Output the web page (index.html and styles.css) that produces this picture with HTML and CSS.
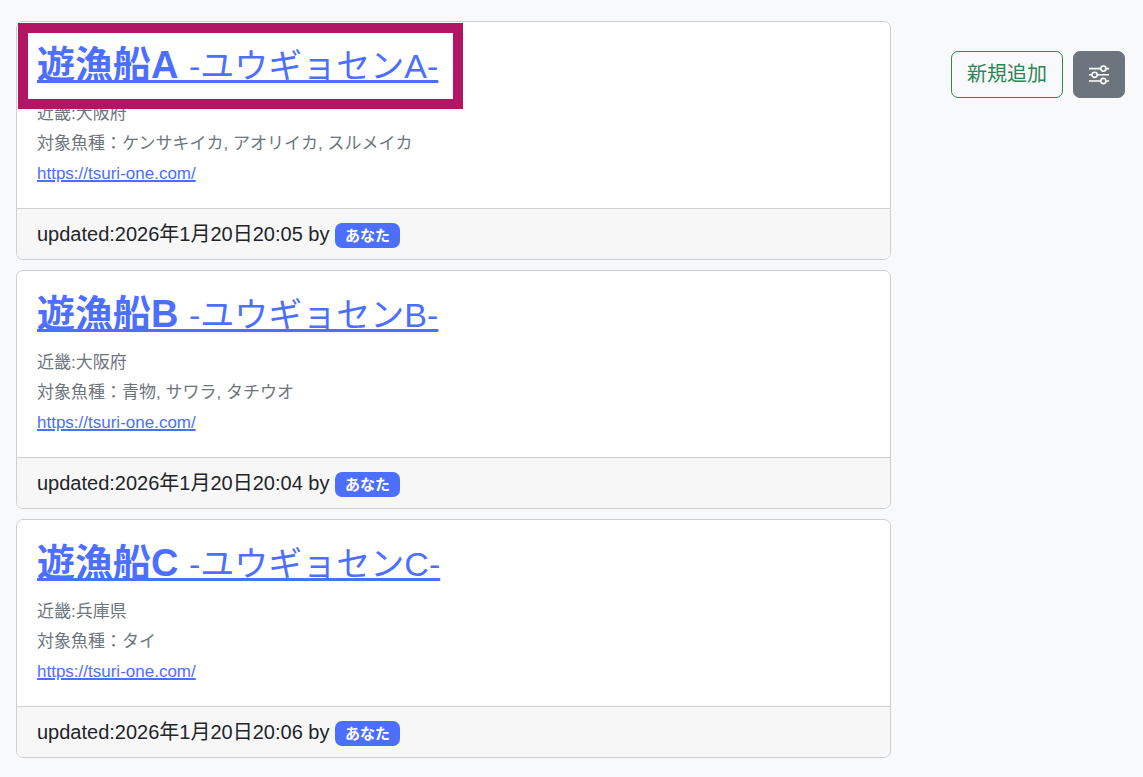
FILE: index.html
```
<!DOCTYPE html>
<html lang="ja">
<head>
<meta charset="utf-8">
<meta name="viewport" content="width=device-width, initial-scale=1">
<title>遊漁船一覧</title>
<link rel="stylesheet" href="styles.css">
</head>
<body>
<div class="page">
  <main class="list">
    <article class="card">
      <div class="card-body">
        <h2 class="title"><a class="highlighted" href="#a"><strong>遊漁船A </strong><span class="kana">-ユウギョセンA-</span></a></h2>
        <p class="meta">近畿:大阪府</p>
        <p class="meta">対象魚種：ケンサキイカ, アオリイカ, スルメイカ</p>
        <p class="site"><a href="https://tsuri-one.com/">https://tsuri-one.com/</a></p>
      </div>
      <footer class="card-footer">updated:2026年1月20日20:05 by <span class="badge">あなた</span></footer>
    </article>
    <article class="card">
      <div class="card-body">
        <h2 class="title"><a href="#b"><strong>遊漁船B </strong><span class="kana">-ユウギョセンB-</span></a></h2>
        <p class="meta">近畿:大阪府</p>
        <p class="meta">対象魚種：青物, サワラ, タチウオ</p>
        <p class="site"><a href="https://tsuri-one.com/">https://tsuri-one.com/</a></p>
      </div>
      <footer class="card-footer">updated:2026年1月20日20:04 by <span class="badge">あなた</span></footer>
    </article>
    <article class="card">
      <div class="card-body">
        <h2 class="title"><a href="#c"><strong>遊漁船C </strong><span class="kana">-ユウギョセンC-</span></a></h2>
        <p class="meta">近畿:兵庫県</p>
        <p class="meta">対象魚種：タイ</p>
        <p class="site"><a href="https://tsuri-one.com/">https://tsuri-one.com/</a></p>
      </div>
      <footer class="card-footer">updated:2026年1月20日20:06 by <span class="badge">あなた</span></footer>
    </article>
  </main>
  <aside class="actions">
    <button class="btn btn-add" type="button">新規追加</button>
    <button class="btn btn-filter" type="button" aria-label="絞り込み">
      <svg width="20" height="20" viewBox="0 0 20 20" fill="none" stroke="currentColor" stroke-width="1.6" aria-hidden="true">
        <path d="M0 3.6h11.5M17.3 3.6H20M0 9.8h2.7M8.5 9.8H20M0 16h11.5M17.3 16H20"/>
        <circle cx="14.4" cy="3.6" r="2.6"/>
        <circle cx="5.6" cy="9.8" r="2.6"/>
        <circle cx="14.4" cy="16" r="2.6"/>
      </svg>
    </button>
  </aside>
</div>
</body>
</html>
```
FILE: styles.css
```
* {
  box-sizing: border-box;
}

body {
  margin: 0;
  background: #f8f9fb;
  color: #212529;
  font-family: "Liberation Sans", "Noto Sans CJK JP", sans-serif;
  font-size: 20px;
  line-height: 30px;
}

a {
  color: #4c6fff;
}

.page {
  display: flex;
  align-items: flex-start;
  gap: 60px;
  padding: 21px 18px 18px 16px;
}

.list {
  flex: 1;
  min-width: 0;
  display: flex;
  flex-direction: column;
  gap: 10px;
}

.card {
  background: #fff;
  border: 1px solid #cfcfd0;
  border-radius: 7px;
}

.card-body {
  padding: 20px 20px 19px;
}

.title {
  margin: 0 0 10px;
  font-size: 38px;
  font-weight: 400;
  font-kerning: none;
  line-height: 46px;
}

.title a {
  position: relative;
  display: inline-block;
  text-decoration-thickness: 3px;
  text-decoration-skip-ink: none;
}

.kana {
  font-size: 34px;
}

.highlighted::after {
  content: "";
  position: absolute;
  inset: -19px -25px -20px -19px;
  border: 10px solid #b31565;
}

.meta,
.site {
  margin: 0;
}

.meta {
  color: #6c757d;
  font-size: 17px;
}

.site {
  font-size: 17px;
}

.site a {
  text-decoration-thickness: 2px;
}

.card-footer {
  padding: 10px 20px;
  background: #f7f7f7;
  border-top: 1px solid #cfcfd0;
  border-radius: 0 0 6px 6px;
}

.badge {
  display: inline-block;
  padding: 5px 10px;
  border-radius: 7px;
  background: #4c6fff;
  color: #fff;
  font-size: 15px;
  font-weight: 700;
  line-height: 15px;
}

.actions {
  display: flex;
  gap: 10px;
  padding-top: 30px;
}

.btn {
  display: flex;
  align-items: center;
  padding: 7px 15px;
  border: 1px solid;
  border-radius: 7px;
  font: inherit;
  line-height: 31px;
}

.btn-add {
  background: transparent;
  color: #2f8553;
}

.btn-filter {
  background: #6c757d;
  border-color: #6c757d;
  color: #fff;
}
```
